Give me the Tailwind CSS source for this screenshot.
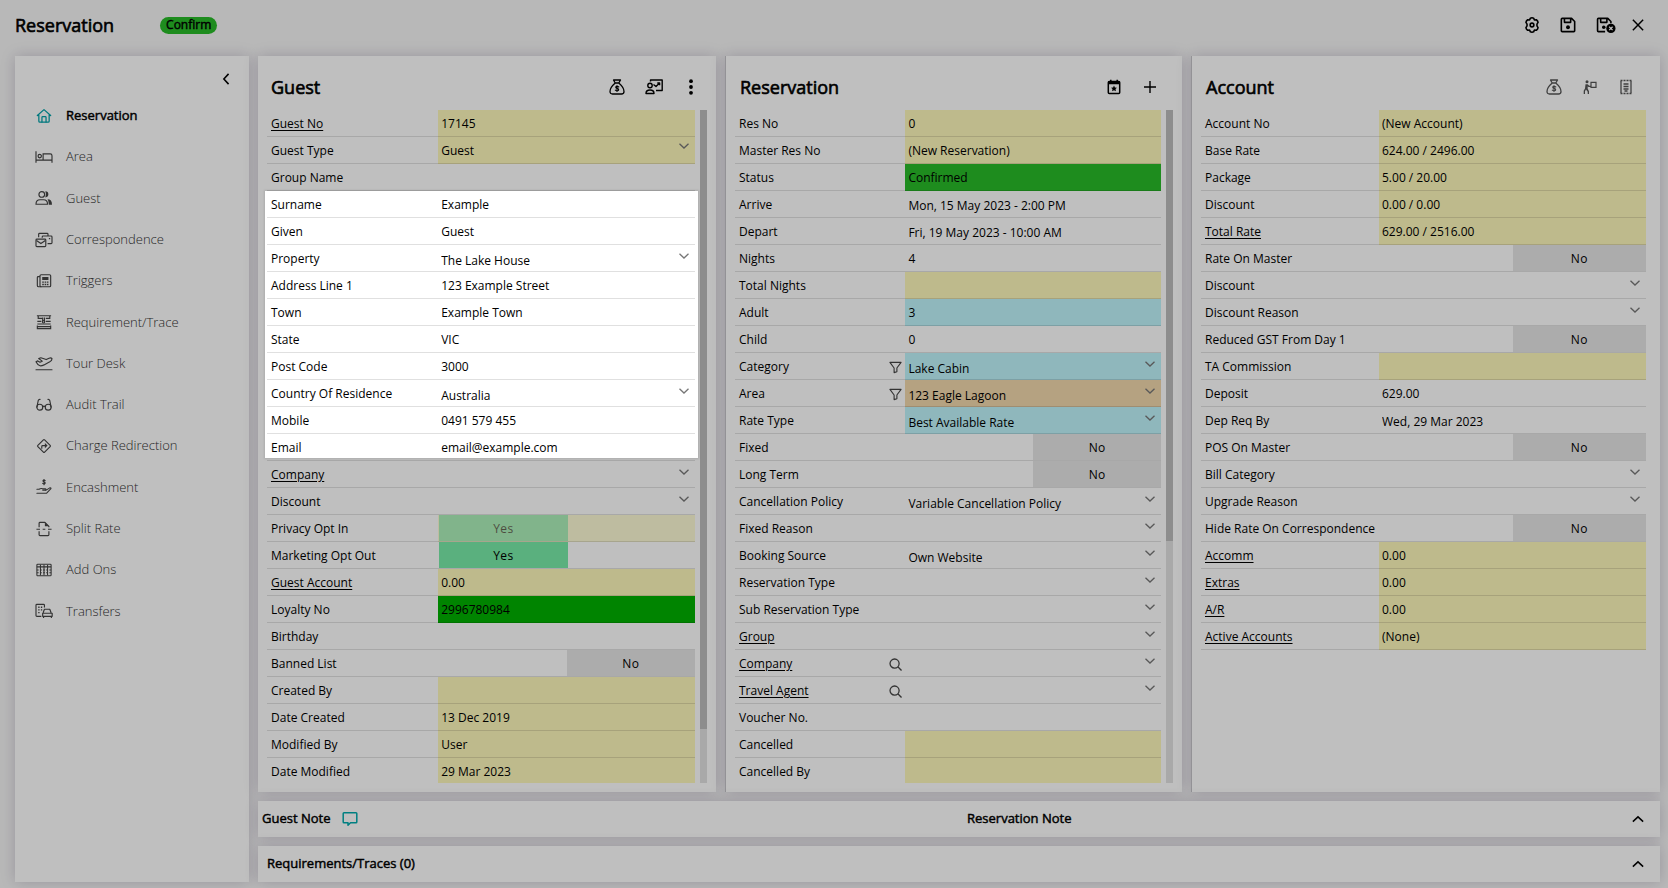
<!DOCTYPE html>
<html lang="en">
<head>
  <meta charset="UTF-8" />
  <meta name="viewport" content="width=device-width, initial-scale=1.0"/>
  <title>Reservation</title>
  <script src="https://cdn.jsdelivr.net/npm/@tailwindcss/browser@4"></script>
</head>
<body class="bg-[#f6f6f6] font-['Open_Sans',sans-serif] text-xs text-black">

  <!-- Icon sprite -->
  <svg class="hidden" aria-hidden="true">
    <symbol id="i-home" viewBox="0 0 18 18"><g fill="none" stroke="currentColor" stroke-width="1.4" stroke-linejoin="round" stroke-linecap="round"><path d="M1.500 8.500 9 1.800l7.500 6.700M3.200 7.500v7.300q0 1.200 1.200 1.200h9.200q1.200 0 1.200-1.200V7.500"/><path d="M6.700 15.800V10.600q0-.8.8-.8h3q.8 0 .8.8v5.200"/></g></symbol>
    <symbol id="i-bed" viewBox="0 0 20 18"><g fill="none" stroke="currentColor" stroke-width="1.3"><path d="M1 2.500v13M1 12.500h18v3M19 12.500V7.500q0-2-2-2H9v7"/><circle cx="5.200" cy="8" r="1.900"/></g></symbol>
    <symbol id="i-people" viewBox="0 0 20 18"><g fill="none" stroke="currentColor" stroke-width="1.3"><circle cx="7.500" cy="5" r="3.200"/><path d="M1 16q0-5 4.500-5h4q4.500 0 4.500 5Z"/></g><path d="M11.500 1.500a3.400 3.400 0 1 1 0 6.800q1.500-3.300 0-6.800ZM14 10.500q5 0 5 6h-3.500q0-4-1.500-6Z" fill="currentColor"/></symbol>
    <symbol id="i-mail" viewBox="0 0 20 18"><g fill="none" stroke="currentColor" stroke-width="1.3" stroke-linejoin="round"><rect x="1" y="8" width="11" height="8.500" rx="1"/><path d="m1.500 9.500 5 3.500 5-3.500M4 6V2.500Q4 1.500 5 1.500h8.500q1 0 1 1V4M8 6.500V5.500q0-1 1-1h9q1 0 1 1V12q0 1-1 1h-4M15.500 7.500h1.500"/></g></symbol>
    <symbol id="i-fax" viewBox="0 0 18 18"><g fill="none" stroke="currentColor" stroke-width="1.300"><rect x="4.500" y="2" width="12" height="13.500" rx="1.200"/><path d="M4.500 4H2.500q-1 0-1 1v9q0 1.500 1.500 1.500h3"/></g><path d="M7 4.500h7v3.500H7zM7 9.500h1.800v1.500H7zM9.700 9.500h1.800v1.500H9.700zM12.300 9.500H14v1.500h-1.700zM7 12.200h1.800v1.500H7zM9.700 12.200h1.800v1.500H9.700zM12.300 12.200H14v1.500h-1.700z" fill="currentColor"/></symbol>
    <symbol id="i-trace" viewBox="0 0 18 18"><g fill="none" stroke="currentColor" stroke-width="1.300"><path d="M1 2h16M2.500 2v3h4.500M11 5h4.500V2M1.500 8.300H6M11 8.300h5.500M1.500 11.300h15M1.500 13v3.500h15V13M1.500 14.200h15M7.500 4v4M9.500 4v4"/><circle cx="8.500" cy="8.800" r="1.300"/></g></symbol>
    <symbol id="i-plane" viewBox="0 0 20 18"><g fill="none" stroke="currentColor" stroke-width="1.300" stroke-linejoin="round" stroke-linecap="round"><path d="M1 6.500 3 5.500 5.500 7 8 5.800 4 2.800 6.500 2l6 2 3.200-1.500q2.300-.8 3.300.5 0 2-2.500 3.500L10 10q-2.500 1.200-4.500 1Q3 10.500 1 6.500ZM1 15.500h18"/></g></symbol>
    <symbol id="i-glasses" viewBox="0 0 18 18"><g fill="none" stroke="currentColor" stroke-width="1.300" stroke-linecap="round"><circle cx="4.300" cy="11.500" r="3.300"/><circle cx="13.700" cy="11.500" r="3.300"/><path d="M7.500 11q1.500-1.300 3 0M1 11.500 2.500 4Q3 2.500 4.500 2.700M17 11.500 15.500 4q-.5-1.500-2-1.300"/></g></symbol>
    <symbol id="i-redirect" viewBox="0 0 18 18"><g fill="none" stroke="currentColor" stroke-width="1.300" stroke-linejoin="round"><rect x="3.600" y="3.600" width="10.800" height="10.800" rx="1" transform="rotate(45 9 9)"/><path d="M6.500 12V9.500q0-1 1-1H11"/></g><path d="m10 5.500 3 3-3 3z" fill="currentColor"/></symbol>
    <symbol id="i-hand" viewBox="0 0 18 18"><g fill="none" stroke="currentColor" stroke-width="1.200" stroke-linecap="round" stroke-linejoin="round"><path d="M1 11.500h2.500q2-1.500 4-.5h3q1 .2.500 1.500H7.500M11 12.800l4.500-2.800q1.500-.3 1.300.8L12 16H1M10.300 1.900Q9.500 1 8.300 1.400 7.200 2.300 8.500 3.200l1.200.4q1.300.9 0 1.900-1.300.4-2.200-.6M9 .5v6"/></g></symbol>
    <symbol id="i-split" viewBox="0 0 18 18"><g fill="none" stroke="currentColor" stroke-width="1.300" stroke-linejoin="round"><path d="M3.500 7V2.500q0-1 1-1H10L14.500 6v1M3.500 11.500v4q0 1 1 1h9q1 0 1-1v-4M.5 9.300h4M7.500 9.300h3M13.500 9.300h4"/></g><path d="M10 1.500 14.500 6H10z" fill="currentColor"/></symbol>
    <symbol id="i-grid" viewBox="0 0 18 18"><g fill="none" stroke="currentColor" stroke-width="1.200"><rect x="1" y="2.500" width="16" height="13" rx="1"/><path d="M1 5.500h16M5 3v12M9 3v12M13 3v12"/><path d="M1 9h16M1 12h16" stroke-dasharray="2 1.500"/></g></symbol>
    <symbol id="i-transfer" viewBox="0 0 20 18"><g fill="none" stroke="currentColor" stroke-width="1.300" stroke-linejoin="round"><path d="M7 15H2q-1 0-1-1V2.500q0-1 1-1h7.500q1 0 1 1V5M9 11l1.500-4h6L18 11M8.500 11.500h10.700V15H8.500zM9.500 15v2M18.300 15v2"/></g><path d="M3.500 4H5v1.500H3.500zM6.500 4H8v1.500H6.500zM3.500 7H5v1.500H3.500zM6.500 7H8v1.500H6.500zM3.500 10H5v1.500H3.500z" fill="currentColor"/></symbol>
    <symbol id="i-gear" viewBox="0 0 18 18"><g fill="none" stroke="currentColor" stroke-width="1.800" stroke-linejoin="round"><path d="M7.200 1.300Q9 .5 10.800 1.300l.9 2 2.200-.2q1.700 1.200 1.900 3L14.600 8v2l1.200 1.900q-.2 1.800-1.900 3l-2.200-.2-.9 2q-1.800.8-3.600 0l-.9-2-2.200.2q-1.700-1.200-1.900-3L3.400 10V8L2.200 6.100q.2-1.800 1.900-3l2.200.2Z"/><circle cx="9" cy="9" r="2.100"/></g></symbol>
    <symbol id="i-save" viewBox="0 0 18 18"><g fill="none" stroke="currentColor" stroke-width="1.800" stroke-linejoin="round"><path d="M2.500 1.500H13L16.500 5v10.500q0 1-1 1h-13q-1 0-1-1v-13q0-1 1-1ZM5 1.500V6h7V1.500"/></g><circle cx="9" cy="11.500" r="2.200" fill="currentColor"/></symbol>
    <symbol id="i-save-close" viewBox="0 0 22 18"><g fill="none" stroke="currentColor" stroke-width="1.800" stroke-linejoin="round"><path d="M10 16.500H2.500q-1 0-1-1v-13q0-1 1-1H13L16.500 5v2M5 1.500V6h7V1.500"/></g><circle cx="8.500" cy="11.500" r="2" fill="currentColor"/><circle cx="16.500" cy="12.800" r="5.200" fill="currentColor"/><path d="m14.600 10.900 3.800 3.800m0-3.800-3.800 3.800" stroke="#fff" stroke-width="1.400"/></symbol>
    <symbol id="i-close" viewBox="0 0 14 14"><path d="m1 1 12 12m0-12-12 12" fill="none" stroke="currentColor" stroke-width="1.700"/></symbol>
    <symbol id="i-left" viewBox="0 0 8 14"><path d="M7 1 1.500 7 7 13" fill="none" stroke="currentColor" stroke-width="1.800"/></symbol>
    <symbol id="i-up" viewBox="0 0 14 8"><path d="M1 7 7 1.500 13 7" fill="none" stroke="currentColor" stroke-width="1.800"/></symbol>
    <symbol id="i-down" viewBox="0 0 10 6"><path d="m.5.7 4.500 4.300L9.500.7" fill="none" stroke="currentColor" stroke-width="1.300"/></symbol>
    <symbol id="i-bag" viewBox="0 0 16 16"><g fill="none" stroke="currentColor" stroke-width="1.300" stroke-linejoin="round" stroke-linecap="round"><path d="M4.500 1h7L9.800 4H6.200ZM6.200 4h3.600Q15 8.500 15 12.500q0 2.500-2.500 2.500h-9Q1 15 1 12.500 1 8.500 6.200 4Z"/><path d="M9.800 8Q8.500 7 7.200 7.500 6 8.500 8 9.400q2.600.8 1.200 2.200Q7.500 12.300 6.300 11.200M8 6.500v6" stroke-width="1.100"/></g></symbol>
    <symbol id="i-present" viewBox="0 0 18 16"><g fill="none" stroke="currentColor" stroke-width="1.400" stroke-linejoin="round"><path d="M5.500 2.500V1h11.700v10.500H11M1 14.500Q1 11 5 11t4 3.500Z"/><circle cx="5" cy="6.500" r="2.200"/><path d="m8.500 5.500 2.500 2 3.500-3.500M12.300 4h2.300v2.300"/></g></symbol>
    <symbol id="i-dots" viewBox="0 0 16 16"><g fill="currentColor"><circle cx="8" cy="2.200" r="1.900"/><circle cx="8" cy="8" r="1.900"/><circle cx="8" cy="13.800" r="1.900"/></g></symbol>
    <symbol id="i-calendar" viewBox="0 0 16 16"><g fill="none" stroke="currentColor" stroke-width="1.500"><rect x="2.300" y="2.500" width="11.400" height="12" rx="1"/><path d="M4.800.8v3M11.200.8v3"/></g><path d="M2 2.300h12v2.900H2zM8 6.500l.9 1.900 2.100.3-1.500 1.400.4 2.100L8 11.200l-1.900 1 .4-2.100L5 8.700l2.100-.3z" fill="currentColor"/></symbol>
    <symbol id="i-plus" viewBox="0 0 16 16"><path d="M8 2v12M2 8h12" fill="none" stroke="currentColor" stroke-width="1.400"/></symbol>
    <symbol id="i-porter" viewBox="0 0 16 16"><circle cx="5" cy="2.700" r="1.500" fill="currentColor"/><path d="M3.500 5.200h2.200l1.500 1.500H9v1.200H6.500L5.700 7.300v2.500l1.300 2.400V15H5.700v-2.300L4 10.500 3 12.300V15H1.700v-3.200L3 9.500Z" fill="currentColor"/><path d="M9 3.300h5v5H9z" fill="none" stroke="currentColor" stroke-width="1.200"/></symbol>
    <symbol id="i-receipt" viewBox="0 0 16 16"><g fill="none" stroke="currentColor" stroke-width="1.300"><path d="M3 2v12M13 2v12M5.500 5h5M5.500 7.500h5M5.500 10h5M6.500 12h3"/><path d="M2.500 1.500h11M2.500 14.500h11" stroke-width="1.500" stroke-dasharray="2 1"/></g></symbol>
    <symbol id="i-filter" viewBox="0 0 14 14"><path d="M1 1.500h12L8.500 7.500v4L5.500 12.500v-5Z" fill="none" stroke="currentColor" stroke-width="1.200" stroke-linejoin="round"/></symbol>
    <symbol id="i-search" viewBox="0 0 14 14"><g fill="none" stroke="currentColor" stroke-width="1.400"><circle cx="6" cy="6" r="4.900"/><path d="m9.500 9.500 4 4"/></g></symbol>
    <symbol id="i-chat" viewBox="0 0 16 16"><path d="M2 1.700h12q.8 0 .8.800v8.500q0 .8-.8.800H8.500L6 14.300V11.800H2q-.8 0-.8-.8V2.500q0-.8.800-.8Z" fill="none" stroke="currentColor" stroke-width="1.500" stroke-linejoin="round"/></symbol>
  </svg>

  <div class="flex h-screen flex-col overflow-hidden pr-2 pb-1.5 pl-[15px]">
    <header class="mb-2 flex h-12 shrink-0 items-center pt-0.5 pr-4">
      <h1 class="text-lg [-webkit-text-stroke:0.035em_black]">Reservation</h1>
      <span class="ml-[46px] flex h-[17px] items-center rounded-full bg-[#28bb28] px-1.5 [-webkit-text-stroke:0.035em_black]">Confirm</span>
      <div class="ml-auto flex items-center gap-5">
        <button aria-label="Settings"><svg class="size-4"><use href="#i-gear"/></svg></button>
        <button aria-label="Save"><svg class="size-4"><use href="#i-save"/></svg></button>
        <div class="flex items-center gap-4">
          <button aria-label="Save and close"><svg class="h-4 w-5"><use href="#i-save-close"/></svg></button>
          <button aria-label="Close"><svg class="size-3"><use href="#i-close"/></svg></button>
        </div>
      </div>
    </header>

    <div class="flex min-h-0 flex-1 gap-[9px]">
      <aside class="w-[234px] shrink-0 bg-white shadow-[0_0_14px_rgba(40,20,70,0.2)]">
        <div class="flex h-[39px] items-center justify-end pt-1.5 pr-[19px]">
          <button aria-label="Collapse menu"><svg class="h-3 w-2"><use href="#i-left"/></svg></button>
        </div>
        <nav id="menu" class="flex h-[537px] flex-col"></nav>
      </aside>

      <main class="flex min-w-0 flex-1 flex-col gap-[9px]">
        <div class="grid min-h-0 flex-1 grid-cols-[458fr_457fr_469fr] gap-[9px]">

          <section class="flex min-h-0 flex-col bg-white px-[9px] pb-[9px] shadow-[0_0_14px_rgba(40,20,70,0.2)]">
            <div class="flex h-[54px] shrink-0 items-center justify-between pt-2 pr-2 pl-1">
              <h2 class="text-lg [-webkit-text-stroke:0.035em_black]">Guest</h2>
              <div class="flex items-center gap-5">
                <button aria-label="Guest balance"><svg class="size-4"><use href="#i-bag"/></svg></button>
                <button aria-label="Guest history"><svg class="h-4 w-[18px]"><use href="#i-present"/></svg></button>
                <button aria-label="More options"><svg class="size-4"><use href="#i-dots"/></svg></button>
              </div>
            </div>
            <div class="flex min-h-0 flex-1 gap-[5px]">
              <div class="relative min-w-0 flex-1">
                <div id="guest" class="h-full overflow-y-auto [scrollbar-width:none]"></div>
                <!-- Spotlight: dims everything outside the contact details -->
                <div class="pointer-events-none absolute top-[81px] -right-[3px] -left-0.5 z-50 h-[267px] shadow-[0_0_2px_1px_rgba(0,0,0,0.1),0_0_0_9999px_rgba(0,0,0,0.25)]"></div>
              </div>
              <div class="w-[7px] bg-[#e2e2e2]"><div class="h-[92%] bg-[#bdbdbd]"></div></div>
            </div>
          </section>

          <section class="flex min-h-0 flex-col border-l border-[#c4c3c8] bg-white px-[9px] pb-[9px] shadow-[0_0_14px_rgba(40,20,70,0.2)]">
            <div class="flex h-[54px] shrink-0 items-center justify-between pt-2 pr-[15px] pl-[5px]">
              <h2 class="text-lg [-webkit-text-stroke:0.035em_black]">Reservation</h2>
              <div class="flex items-center gap-5">
                <button aria-label="Calendar"><svg class="size-4"><use href="#i-calendar"/></svg></button>
                <button aria-label="Add"><svg class="size-4"><use href="#i-plus"/></svg></button>
              </div>
            </div>
            <div class="flex min-h-0 flex-1 gap-[5px]">
              <div id="reservation" class="min-w-0 flex-1 overflow-y-auto [scrollbar-width:none]"></div>
              <div class="w-[7px] bg-[#e2e2e2]"><div class="h-[64%] bg-[#bdbdbd]"></div></div>
            </div>
          </section>

          <section class="flex min-h-0 flex-col border-l border-[#c4c3c8] bg-white pr-[14px] pb-[9px] pl-[9px] shadow-[0_0_14px_rgba(40,20,70,0.2)]">
            <div class="flex h-[54px] shrink-0 items-center justify-between pt-2 pr-3 pl-[5px]">
              <h2 class="text-lg [-webkit-text-stroke:0.035em_black]">Account</h2>
              <div class="flex items-center gap-5 text-[#555]">
                <button aria-label="Account balance"><svg class="size-4"><use href="#i-bag"/></svg></button>
                <button aria-label="Check in"><svg class="size-4"><use href="#i-porter"/></svg></button>
                <button aria-label="Receipt"><svg class="size-4"><use href="#i-receipt"/></svg></button>
              </div>
            </div>
            <div id="account" class="min-h-0 flex-1 overflow-y-auto [scrollbar-width:none]"></div>
          </section>
        </div>

        <section class="flex h-9 shrink-0 items-center bg-white pr-4 shadow-[0_0_14px_rgba(40,20,70,0.2)]">
          <h3 class="flex w-1/2 items-center gap-3 pl-1 text-[13px] [-webkit-text-stroke:0.035em_black]">Guest Note
            <svg class="size-4 text-[#00aaad]"><use href="#i-chat"/></svg>
          </h3>
          <h3 class="pl-4 text-[13px] [-webkit-text-stroke:0.035em_black]">Reservation Note</h3>
          <button class="ml-auto" aria-label="Expand notes"><svg class="h-2 w-3"><use href="#i-up"/></svg></button>
        </section>

        <section class="flex h-9 shrink-0 items-center justify-between bg-white pr-4 pl-[9px] shadow-[0_0_14px_rgba(40,20,70,0.2)]">
          <h3 class="text-[13px] [-webkit-text-stroke:0.035em_black]">Requirements/Traces (0)</h3>
          <button aria-label="Expand requirements"><svg class="h-2 w-3"><use href="#i-up"/></svg></button>
        </section>
      </main>
    </div>
  </div>

  <script>
    const menuItems = [
      ['Reservation', 'home'], ['Area', 'bed'], ['Guest', 'people'], ['Correspondence', 'mail'],
      ['Triggers', 'fax'], ['Requirement/Trace', 'trace'], ['Tour Desk', 'plane'], ['Audit Trail', 'glasses'],
      ['Charge Redirection', 'redirect'], ['Encashment', 'hand'], ['Split Rate', 'split'],
      ['Add Ons', 'grid'], ['Transfers', 'transfer']
    ];

    const tones = {
      locked: 'bg-[#fef8bb]',
      status: 'bg-[#28bb28]',
      loyalty: 'bg-[#00b000]',
      blue: 'bg-[#bff4fb]',
      orange: 'bg-[#f2d8ac]'
    };

    // label, value, options (type: text | date | select | lockedSelect | yes | no)
    const guestRows = [
      ['Guest No', '17145', { tone: 'locked', link: true }],
      ['Guest Type', 'Guest', { type: 'lockedSelect', tone: 'locked' }],
      ['Group Name', ''],
      ['Surname', 'Example'],
      ['Given', 'Guest'],
      ['Property', 'The Lake House', { type: 'select' }],
      ['Address Line 1', '123 Example Street'],
      ['Town', 'Example Town'],
      ['State', 'VIC'],
      ['Post Code', '3000'],
      ['Country Of Residence', 'Australia', { type: 'select' }],
      ['Mobile', '0491 579 455'],
      ['Email', 'email@example.com'],
      ['Company', '', { type: 'select', link: true }],
      ['Discount', '', { type: 'select' }],
      ['Privacy Opt In', 'Yes', { type: 'yes', disabled: true }],
      ['Marketing Opt Out', 'Yes', { type: 'yes' }],
      ['Guest Account', '0.00', { tone: 'locked', link: true }],
      ['Loyalty No', '2996780984', { tone: 'loyalty' }],
      ['Birthday', ''],
      ['Banned List', 'No', { type: 'no' }],
      ['Created By', '', { tone: 'locked' }],
      ['Date Created', '13 Dec 2019', { tone: 'locked' }],
      ['Modified By', 'User', { tone: 'locked' }],
      ['Date Modified', '29 Mar 2023', { tone: 'locked' }]
    ];

    const reservationRows = [
      ['Res No', '0', { tone: 'locked' }],
      ['Master Res No', '(New Reservation)', { tone: 'locked' }],
      ['Status', 'Confirmed', { tone: 'status' }],
      ['Arrive', 'Mon, 15 May 2023 - 2:00 PM', { type: 'date' }],
      ['Depart', 'Fri, 19 May 2023 - 10:00 AM', { type: 'date' }],
      ['Nights', '4'],
      ['Total Nights', '', { tone: 'locked' }],
      ['Adult', '3', { tone: 'blue' }],
      ['Child', '0'],
      ['Category', 'Lake Cabin', { type: 'select', tone: 'blue', icon: 'filter' }],
      ['Area', '123 Eagle Lagoon', { type: 'select', tone: 'orange', icon: 'filter' }],
      ['Rate Type', 'Best Available Rate', { type: 'select', tone: 'blue' }],
      ['Fixed', 'No', { type: 'no' }],
      ['Long Term', 'No', { type: 'no' }],
      ['Cancellation Policy', 'Variable Cancellation Policy', { type: 'select' }],
      ['Fixed Reason', '', { type: 'select' }],
      ['Booking Source', 'Own Website', { type: 'select' }],
      ['Reservation Type', '', { type: 'select' }],
      ['Sub Reservation Type', '', { type: 'select' }],
      ['Group', '', { type: 'select', link: true }],
      ['Company', '', { type: 'select', link: true, icon: 'search' }],
      ['Travel Agent', '', { type: 'select', link: true, icon: 'search' }],
      ['Voucher No.', ''],
      ['Cancelled', '', { tone: 'locked' }],
      ['Cancelled By', '', { tone: 'locked' }]
    ];

    const accountRows = [
      ['Account No', '(New Account)', { tone: 'locked' }],
      ['Base Rate', '624.00 / 2496.00', { tone: 'locked' }],
      ['Package', '5.00 / 20.00', { tone: 'locked' }],
      ['Discount', '0.00 / 0.00', { tone: 'locked' }],
      ['Total Rate', '629.00 / 2516.00', { tone: 'locked', link: true }],
      ['Rate On Master', 'No', { type: 'no' }],
      ['Discount', '', { type: 'select' }],
      ['Discount Reason', '', { type: 'select' }],
      ['Reduced GST From Day 1', 'No', { type: 'no' }],
      ['TA Commission', '', { tone: 'locked' }],
      ['Deposit', '629.00'],
      ['Dep Req By', 'Wed, 29 Mar 2023', { type: 'date' }],
      ['POS On Master', 'No', { type: 'no' }],
      ['Bill Category', '', { type: 'select' }],
      ['Upgrade Reason', '', { type: 'select' }],
      ['Hide Rate On Correspondence', 'No', { type: 'no' }],
      ['Accomm', '0.00', { tone: 'locked', link: true }],
      ['Extras', '0.00', { tone: 'locked', link: true }],
      ['A/R', '0.00', { tone: 'locked', link: true }],
      ['Active Accounts', '(None)', { tone: 'locked', link: true }]
    ];

    function renderControl(id, value, opts) {
      if (opts.type === 'select') {
        return `<select id="${id}" class="block h-full w-full appearance-none bg-transparent pt-1.5 pl-[3px] outline-none"><option>${value}</option></select>
          <svg class="pointer-events-none absolute top-2 right-1.5 h-1.5 w-2.5 text-[#777]"><use href="#i-down"/></svg>`;
      }
      if (opts.type === 'lockedSelect') {
        return `<select id="${id}" class="block h-full w-full appearance-none bg-transparent pt-0.5 pl-[3px] outline-none"><option>${value}</option></select>
          <svg class="pointer-events-none absolute top-1.5 right-1.5 h-1.5 w-2.5 text-[#777]"><use href="#i-down"/></svg>`;
      }
      if (opts.type === 'yes') {
        return `<button id="${id}" aria-pressed="true" ${opts.disabled ? 'disabled' : ''} class="ml-px block h-full w-1/2 bg-[#79eba8] pt-0.5 tracking-wide disabled:opacity-60">Yes</button>`;
      }
      if (opts.type === 'no') {
        return `<button id="${id}" aria-pressed="false" class="ml-auto block h-full w-1/2 bg-[#e6e6e6] pt-0.5 tracking-wide">No</button>`;
      }
      const pad = opts.type === 'date' ? 'pt-0.5' : '';
      const readonly = opts.tone === 'locked' ? 'readonly' : '';
      return `<input id="${id}" type="text" value="${value}" ${readonly} class="block h-full w-full bg-transparent pl-[3px] outline-none ${pad}" />`;
    }

    function renderRows(name, rows) {
      document.getElementById(name).innerHTML = rows.map(([label, value, opts = {}], i) => {
        const id = `${name}-${i}`;
        const text = opts.link ? `<a href="#" class="underline underline-offset-2">${label}</a>` : label;
        const icon = opts.icon
          ? `<button aria-label="${label} ${opts.icon}" class="mr-[3px] text-[#444]"><svg class="size-[13px]"><use href="#i-${opts.icon}"/></svg></button>`
          : '';
        const tone = opts.disabled ? 'bg-[#fef8bb]/60' : (tones[opts.tone] || '');
        return `
          <div class="flex h-[27px]">
            <div class="flex w-2/5 items-center justify-between border-b border-black/12 pt-0.5 pl-1">
              <label for="${id}" class="whitespace-nowrap">${text}</label>${icon}
            </div>
            <div class="relative w-3/5 border-b border-black/12 ${tone}">${renderControl(id, value, opts)}</div>
          </div>`;
      }).join('');
    }

    document.getElementById('menu').innerHTML = menuItems.map(([label, icon], i) => `
      <a href="#" class="flex flex-1 items-center gap-[13px] pl-5 text-[13px] ${i === 0 ? 'text-black [-webkit-text-stroke:0.035em_black]' : 'font-light text-[#333]'}">
        <svg class="h-4 w-[18px] ${i === 0 ? 'text-[#00a0a8]' : 'text-[#444]'}"><use href="#i-${icon}"/></svg>${label}
      </a>`).join('');

    renderRows('guest', guestRows);
    renderRows('reservation', reservationRows);
    renderRows('account', accountRows);
  </script>
</body>
</html>
